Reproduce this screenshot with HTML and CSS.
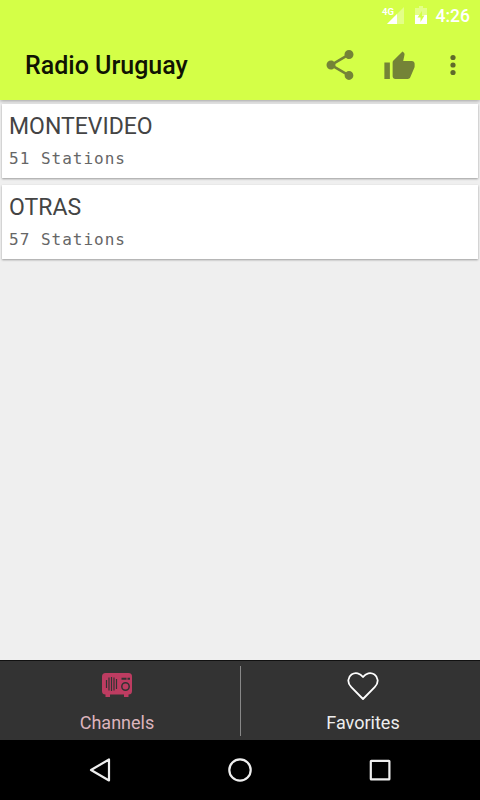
FILE: index.html
```html
<!DOCTYPE html>
<html lang="en">
<head>
  <meta charset="UTF-8">
  <title>Radio Uruguay</title>
  <link rel="stylesheet" href="styles.css">
</head>
<body>

<header class="header">
  <div class="status-bar">
    <svg class="signal" width="24" height="20" viewBox="0 0 24 20">
      <path d="M23 1V18H6z" fill="#fff" fill-opacity=".35"/>
      <path d="M16 8V18H6z" fill="#fff"/>
      <text x="1" y="9" class="network">4G</text>
    </svg>
    <svg class="battery" width="12" height="18" viewBox="0 0 12 18">
      <path d="M4 0H8V2H12V9H0V2H4z" fill="#fff" fill-opacity=".35"/>
      <path d="M0 9H12V18H0z" fill="#fff"/>
      <path d="M7 5L2.500 11.500H5.500V16L9.500 9.500H7z" fill="#d4ff47"/>
    </svg>
    <span class="clock">4:26</span>
  </div>
  <div class="toolbar">
    <h1>Radio Uruguay</h1>
    <svg class="share" width="36" height="36" viewBox="0 0 24 24">
      <path d="M18 16.080c-.76 0-1.440.3-1.960.77L8.910 12.700c.05-.23.09-.46.09-.7s-.04-.47-.09-.7l7.050-4.110c.54.5 1.250.81 2.040.81 1.660 0 3-1.340 3-3s-1.340-3-3-3-3 1.340-3 3c0 .24.04.47.09.7L8.040 9.810C7.500 9.310 6.790 9 6 9c-1.660 0-3 1.340-3 3s1.340 3 3 3c.79 0 1.500-.31 2.040-.81l7.120 4.160c-.05.21-.08.43-.08.65 0 1.610 1.310 2.920 2.920 2.920s2.920-1.310 2.920-2.920-1.310-2.920-2.920-2.920z"/>
    </svg>
    <svg class="like" width="33" height="33" viewBox="0 0 24 24">
      <path d="M1 21h4V9H1v12zm22-11c0-1.100-.9-2-2-2h-6.310l.95-4.570.03-.32c0-.41-.17-.79-.44-1.060L14.170 1 7.590 7.590C7.220 7.950 7 8.450 7 9v10c0 1.100.9 2 2 2h9c.83 0 1.540-.5 1.840-1.220l3.020-7.050c.09-.23.14-.47.14-.73v-2z"/>
    </svg>
    <svg class="more" width="30" height="30" viewBox="0 0 30 30">
      <circle cx="15" cy="7.500" r="2.600"/>
      <circle cx="15" cy="15" r="2.600"/>
      <circle cx="15" cy="22.500" r="2.600"/>
    </svg>
  </div>
</header>

<main class="channels">
  <div class="card">
    <h2>MONTEVIDEO</h2>
    <p>51 Stations</p>
  </div>
  <div class="card">
    <h2>OTRAS</h2>
    <p>57 Stations</p>
  </div>
</main>

<nav class="tabs">
  <div class="tab active">
    <svg width="32" height="28" viewBox="0 0 32 28">
      <rect x="1" y="1" width="30" height="21.500" rx="3.500" fill="#bd3c61"/>
      <path d="M4.500 22h4.500v3h-4.500zM23 22h4.500v3H23z" fill="#bd3c61"/>
      <path d="M5.500 8v8M8 5.500v13M10.500 5v14M13 5.500v13M15.500 7v10" stroke="#333" stroke-width="1.200"/>
      <path d="M20.500 6.800h5M26.500 6.800h2.500" stroke="#333" stroke-width="2"/>
      <circle cx="24.500" cy="14.500" r="3.700" fill="none" stroke="#333" stroke-width="1.500"/>
    </svg>
    <span>Channels</span>
  </div>
  <div class="divider"></div>
  <div class="tab">
    <svg width="32" height="28" viewBox="0 0 32 28">
      <path d="M16 27L4.300 15.200C-.3 10.500 1 5 4.500 2.500C8.500-.2 13.200 1.200 16 5C18.800 1.200 23.500-.2 27.500 2.500C31 5 32.300 10.500 27.700 15.200z" fill="none" stroke="#fff" stroke-width="1.800" stroke-linejoin="round"/>
    </svg>
    <span>Favorites</span>
  </div>
</nav>

<footer class="nav-bar">
  <svg width="24" height="26" viewBox="0 0 24 26">
    <path d="M21 2.500V23.500L3 13z"/>
  </svg>
  <svg width="24" height="26" viewBox="0 0 24 26">
    <circle cx="12" cy="13" r="10.700"/>
  </svg>
  <svg width="24" height="26" viewBox="0 0 24 26">
    <rect x="2.800" y="3.800" width="18.600" height="18.600" rx=".5"/>
  </svg>
</footer>

</body>
</html>
```
FILE: styles.css
```css
* { box-sizing: border-box; }
body { margin: 0; height: 800px; display: flex; flex-direction: column; overflow: hidden; background-color: #efefef; font-family: Roboto, sans-serif; }
h1, h2, p { margin: 0; font-weight: normal; }
svg { display: block; flex: none; }

.header { height: 100px; background-color: #d4ff47; box-shadow: 0 1px 4px rgba(0, 0, 0, 0.35); }
.status-bar { height: 30px; padding: 6px 10px 0 0; display: flex; justify-content: flex-end; }
.network { font-size: 9.5px; font-weight: bold; fill: #fff; }
.battery { margin: 0 9px 0 10px; }
.clock { color: #fff; font-size: 17.5px; font-weight: 500; line-height: 20px; }
.toolbar { height: 70px; padding: 0 12px 0 25px; display: flex; align-items: center; }
.toolbar svg { fill: #748337; }
.toolbar h1 { flex: 1; font-size: 25px; font-weight: 500; color: #101303; }
.like { margin: 2px 22px 0 25px; }
.toolbar .more { fill: #5f6b2b; }

.channels { flex: 1; padding: 4px 2px; }
.card { height: 74px; margin-bottom: 7px; padding: 8px 7px; background-color: #fff; box-shadow: 0 1px 2px rgba(0, 0, 0, 0.35); }
.card h2 { font-size: 23px; line-height: 30px; color: #444; }
.card p { margin-top: 7px; font-family: "DejaVu Sans Mono", monospace; font-size: 16px; line-height: 20px; letter-spacing: 1px; color: #666; }

.tabs { height: 80px; display: flex; align-items: center; background-color: #333; border-top: 1px solid #111; }
.tab { flex: 1; height: 100%; padding-top: 11px; display: flex; flex-direction: column; align-items: center; color: #eee; font-size: 18px; }
.tab span { margin-top: 12px; line-height: 22px; }
.tab.active { padding-right: 6px; color: #dcb4bd; }
.tab:last-child { padding-left: 5px; }
.divider { width: 1px; height: 70px; background-color: #888; }

.nav-bar { height: 60px; padding: 0 88px; display: flex; justify-content: space-between; align-items: center; background-color: #000; }
.nav-bar svg { fill: none; stroke: #eee; stroke-width: 2.2; stroke-linejoin: round; }
```
